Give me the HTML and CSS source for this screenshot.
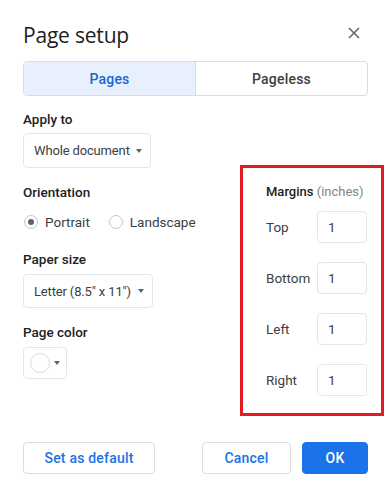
FILE: index.html
```html
<!DOCTYPE html>
<html>
<head>
<meta charset="utf-8">
<link rel="stylesheet" href="styles.css">
</head>
<body>
<div class="dialog">
  <div class="header">
    <h1 class="title">Page setup</h1>
    <svg class="close" width="12" height="12" viewBox="0 0 12 12"><path d="M1 1L11 11M11 1L1 11" stroke="#5f6368" stroke-width="1.5" fill="none"/></svg>
  </div>
  <div class="tabs">
    <div class="tab active">Pages</div>
    <div class="tab">Pageless</div>
  </div>
  <div class="content">
    <div class="left">
      <div class="label first">Apply to</div>
      <div class="select doc">Whole document <span class="caret"></span></div>
      <div class="label">Orientation</div>
      <div class="radios">
        <div class="radio"><span class="circle on"></span>Portrait</div>
        <div class="radio"><span class="circle"></span>Landscape</div>
      </div>
      <div class="label paper">Paper size</div>
      <div class="select size">Letter (8.5" x 11") <span class="caret"></span></div>
      <div class="label">Page color</div>
      <div class="color"><span class="swatch"></span><span class="caret"></span></div>
    </div>
    <div class="margins">
      <div class="mtitle">Margins <span class="unit">(inches)</span></div>
      <div class="mrow"><span class="mlabel">Top</span><div class="input">1</div></div>
      <div class="mrow"><span class="mlabel">Bottom</span><div class="input">1</div></div>
      <div class="mrow"><span class="mlabel">Left</span><div class="input">1</div></div>
      <div class="mrow"><span class="mlabel">Right</span><div class="input">1</div></div>
    </div>
  </div>
  <div class="footer">
    <div class="btn default">Set as default</div>
    <div class="actions">
      <div class="btn cancel">Cancel</div>
      <div class="btn ok">OK</div>
    </div>
  </div>
</div>
</body>
</html>
```
FILE: styles.css
```css
* { box-sizing: border-box; }
html, body { margin: 0; padding: 0; background: #fff; }
body { font-family: Roboto, "Noto Sans", Arial, sans-serif; color: #202124; width: 390px; height: 497px; overflow: hidden; white-space: nowrap; }
.dialog { padding: 0 22px 0 23px; }
.header { display: flex; justify-content: space-between; align-items: center; padding-top: 21px; }
.title { margin: 0; font-family: "Open Sans", Roboto, sans-serif; font-weight: 400; font-size: 21px; line-height: 28px; color: #202124; letter-spacing: -0.2px; }
.close { margin-right: 8px; margin-top: -4px; }
.tabs { display: flex; margin-top: 12px; height: 35px; border: 1px solid #dadce0; border-radius: 4px; overflow: hidden; }
.tab { flex: 1; display: flex; align-items: center; justify-content: center; font-size: 14px; font-weight: 500; color: #3c4043; letter-spacing: 0.2px; }
.tab.active { background: #e8f0fe; color: #1967d2; border-right: 1px solid #dadce0; }
.content { display: flex; align-items: flex-start; margin-right: -16px; }
.left { width: 217px; }
.label { font-size: 13.5px; font-weight: 500; line-height: 20px; margin-top: 14px; color: #202124; }
.label.first { margin-top: 13px; }
.label.paper { margin-top: 17px; }
.select { display: flex; align-items: center; gap: 6px; margin-top: 4px; height: 35px; padding: 0 8px 0 10px; border: 1px solid #e3e5e8; border-radius: 4px; font-size: 13px; letter-spacing: -0.15px; color: #3c4043; }
.select.doc { width: 128px; }
.select.size { width: 130px; height: 34px; margin-top: 5px; }
.caret { display: inline-block; flex: none; width: 0; height: 0; border-left: 3.5px solid transparent; border-right: 3.5px solid transparent; border-top: 4px solid #5f6368; margin-left: auto; }
.radios { display: flex; margin-top: 10px; height: 20px; align-items: center; font-size: 13.5px; color: #3c4043; }
.radio { display: flex; align-items: center; }
.radio + .radio { margin-left: 18px; }
.circle { width: 14px; height: 14px; border: 1px solid #c4c7cb; border-radius: 50%; margin: 0 7px 0 1px; position: relative; }
.circle.on::after { content: ""; position: absolute; left: 3px; top: 3px; width: 6px; height: 6px; border-radius: 50%; background: #5f6368; }
.color { display: flex; align-items: center; margin-top: 5px; width: 44px; height: 32px; border: 1px solid #e3e5e8; border-radius: 4px; padding: 0 6px; }
.swatch { width: 20px; height: 20px; border-radius: 50%; border: 1px solid #dadce0; }
.margins { width: 144px; margin-top: 69px; border: 3px solid #e31b23; padding: 14px 14px 17px 23px; }
.mtitle { font-size: 13px; font-weight: 500; line-height: 20px; color: #202124; }
.unit { font-weight: 400; color: #80868b; }
.mrow { display: flex; align-items: center; justify-content: space-between; margin-top: 19px; }
.mtitle + .mrow { margin-top: 9px; }
.mlabel { font-size: 13.5px; color: #3c4043; }
.input { width: 50px; height: 32px; border: 1px solid #e3e5e8; border-radius: 4px; padding: 0 10px; display: flex; align-items: center; font-size: 13.5px; color: #3c4043; }
.footer { display: flex; justify-content: space-between; margin-top: 26px; }
.actions { display: flex; gap: 11px; }
.btn { height: 32px; border: 1px solid #dadce0; border-radius: 4px; display: flex; align-items: center; justify-content: center; font-size: 14px; font-weight: 500; color: #1a73e8; letter-spacing: 0.2px; }
.btn.default { width: 132px; }
.btn.cancel { width: 89px; }
.btn.ok { width: 66px; background: #1a73e8; border-color: #1a73e8; color: #fff; }
```
